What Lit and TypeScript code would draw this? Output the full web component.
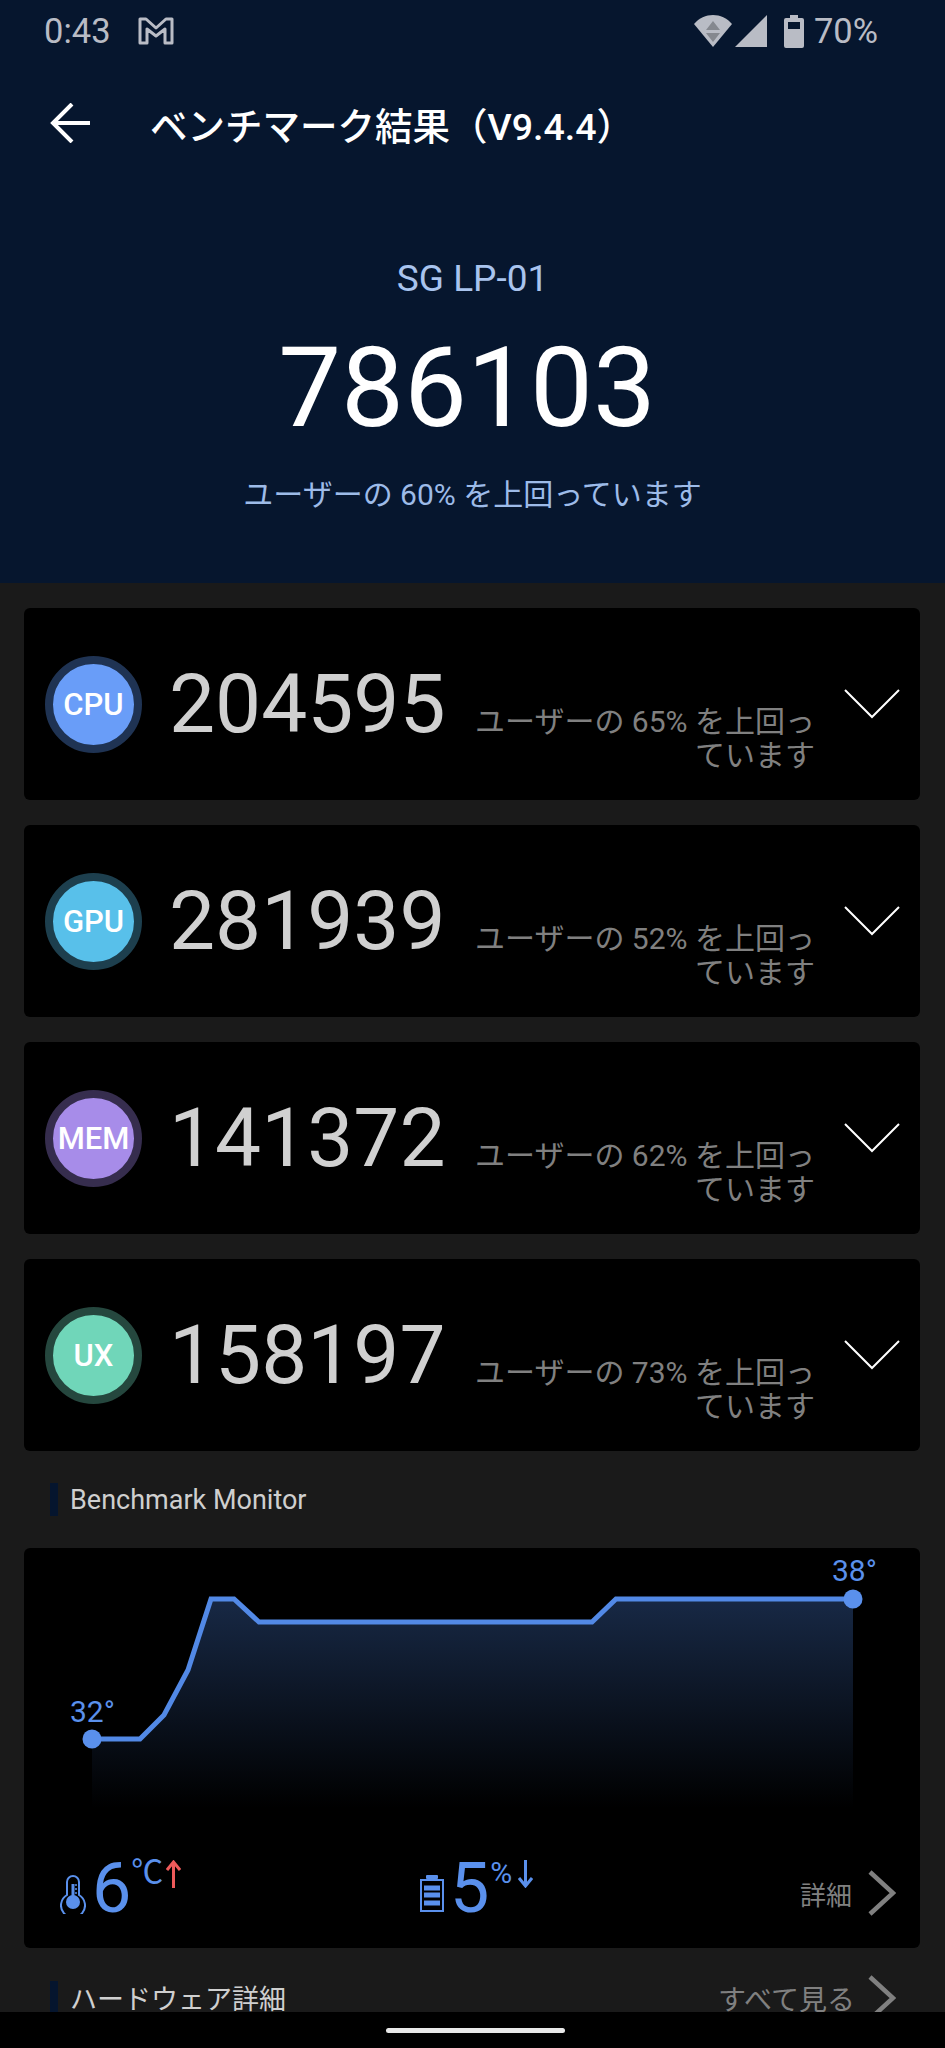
import { LitElement, css, html, svg } from "lit";
import { customElement } from "lit/decorators.js";

const SCORES = [
  { label: "CPU", score: "204595", pct: 65, fill: "#699df8", ring: "#1f3353" },
  { label: "GPU", score: "281939", pct: 52, fill: "#58c0ea", ring: "#1d3f4e" },
  { label: "MEM", score: "141372", pct: 62, fill: "#a78ce9", ring: "#362d4e" },
  { label: "UX", score: "158197", pct: 73, fill: "#70d6b9", ring: "#25473e" },
];

// temperature curve, in chart coordinates
const CURVE = [
  [68, 191], [116, 191], [140, 167], [164, 122], [187, 51], [210, 51],
  [235, 74], [568, 74], [592, 51], [829, 51],
];

@customElement("app-root")
export class AppRoot extends LitElement {
  static styles = css`
    :host {
      display: flex;
      flex-direction: column;
      height: 2048px;
      overflow: hidden;
      background: #1a1a1a;
      font-family: Roboto, "Noto Sans CJK JP", sans-serif;
    }

    .header {
      flex: none;
      height: 583px;
      background: #06162e;
      display: flex;
      flex-direction: column;
    }

    .status {
      height: 62px;
      display: flex;
      align-items: center;
      padding: 0 67px 0 44px;
      color: #b9bcc5;
      font-size: 34.5px;
    }

    .status .mail {
      margin-left: 27px;
    }

    .status .right {
      margin-left: auto;
      display: flex;
      align-items: center;
    }

    .toolbar {
      height: 122px;
      display: flex;
      align-items: center;
      padding-left: 50px;
      color: #fff;
      font-size: 37.5px;
      font-weight: 500;
    }

    .toolbar .title {
      margin-left: 60px;
    }

    .device {
      margin-top: 75px;
      height: 40px;
      line-height: 40px;
      text-align: center;
      color: #a9c4ee;
      font-size: 37px;
    }

    .total {
      margin-top: 29px;
      padding-right: 11px;
      height: 120px;
      line-height: 120px;
      text-align: center;
      color: #fff;
      font-size: 112px;
    }

    .rank {
      margin-top: 27px;
      height: 40px;
      line-height: 40px;
      text-align: center;
      color: #9dbbe8;
      font-size: 30px;
    }

    .content {
      flex: 1;
      min-height: 0;
      overflow: hidden;
      padding: 25px 25px 0 24px;
      display: flex;
      flex-direction: column;
    }

    .card {
      flex: none;
      background: #000;
      border-radius: 6px;
    }

    .score {
      height: 192px;
      margin-bottom: 25px;
      display: flex;
      align-items: center;
      padding: 0 20px 0 21px;
    }

    .badge {
      flex: none;
      box-sizing: border-box;
      width: 97px;
      height: 97px;
      border-radius: 50%;
      border: 8px solid;
      display: flex;
      align-items: center;
      justify-content: center;
      color: #fff;
      font-size: 31px;
      font-weight: 500;
    }

    .value {
      flex: none;
      margin-left: 27px;
      color: #d0d0d0;
      font-size: 82px;
      line-height: 100px;
    }

    .pct {
      flex: 1;
      margin: 70px 0 0 19px;
      text-align: right;
      color: #808080;
      font-size: 30px;
      line-height: 34px;
    }

    .score svg {
      flex: none;
      margin-left: 29px;
    }

    .section {
      flex: none;
      height: 33px;
      display: flex;
      align-items: center;
      padding-left: 26px;
      color: #cfcfcf;
      font-size: 27px;
    }

    .section .mark {
      flex: none;
      width: 8px;
      height: 33px;
      background: #05152e;
      margin-right: 12px;
    }

    .section .link {
      margin-left: auto;
      display: flex;
      align-items: center;
      color: #808080;
      font-size: 28px;
    }

    .section .link svg {
      margin: 0 24px 0 13px;
    }

    .monitor-title {
      margin-top: 7px;
    }

    .monitor {
      margin-top: 32px;
      height: 400px;
    }

    .monitor svg.chart {
      display: block;
    }

    .monitor text {
      fill: #5a90ec;
      font-size: 30px;
      font-family: Roboto, sans-serif;
    }

    .stats {
      display: grid;
      grid-template-columns: 360px 1fr auto;
      padding: 5px 24px 0 36px;
      color: #5a90ec;
    }

    .stat {
      display: flex;
      align-items: flex-start;
    }

    .stat .icon {
      margin: 22px 6px 0 0;
    }

    .stat .num {
      font-size: 70px;
      line-height: 70px;
    }

    .stat .unit {
      margin: 2px 3px 0 0;
      font-size: 32px;
      line-height: 34px;
    }

    .stat .pct-unit {
      margin: 3px 6px 0 1px;
      font-size: 30px;
      line-height: 34px;
      font-family: Roboto, sans-serif;
    }

    .stat .dir {
      margin-top: 7px;
    }

    .details {
      display: flex;
      align-items: center;
      height: 70px;
      margin-top: 5px;
      color: #808080;
      font-size: 26px;
    }

    .details svg {
      margin-left: 16px;
    }

    .hardware {
      margin-top: 33px;
    }

    .navbar {
      flex: none;
      height: 36px;
      background: #000;
      display: flex;
      align-items: center;
      justify-content: center;
    }

    .navbar .pill {
      width: 179px;
      height: 5px;
      margin: 1px 0 0 5px;
      border-radius: 3px;
      background: #e8e8e8;
    }
  `;

  private chevron(color = "#808080") {
    return html`<svg width="28" height="46" viewBox="0 0 28 46" fill="none">
      <path d="M2 2 L25 23 L2 44" stroke=${color} stroke-width="4.5" />
    </svg>`;
  }

  private statusBar() {
    return html`<div class="status">
      <span>0:43</span>
      <svg class="mail" width="36" height="28" viewBox="0 0 36 28" fill="none" stroke="#b9bcc5" stroke-width="3" stroke-linejoin="round">
        <path d="M2 2 H8 L18 11 L28 2 H34 V26 H27 V12 L18 19 L9 12 V26 H2 Z" />
      </svg>
      <div class="right">
        <svg width="38" height="32" viewBox="0 0 38 32">
          <path d="M0 9 C10 -3 28 -3 38 9 L19 32 Z" fill="#b9bcc5" />
          <path d="M19 6 L26 15 H12 Z M12 18 H26 L19 27 Z" fill="#85888f" />
        </svg>
        <svg style="margin-left:3px" width="32" height="32" viewBox="0 0 32 32">
          <path d="M0 32 L32 0 V32 Z" fill="#b9bcc5" />
        </svg>
        <svg style="margin-left:17px" width="20" height="33" viewBox="0 0 20 33">
          <path fill-rule="evenodd" d="M6 0 H14 V3 H18 Q20 3 20 5 V31 Q20 33 18 33 H2 Q0 33 0 31 V5 Q0 3 2 3 H6 Z M4 7 V14 H16 V7 Z" fill="#b9bcc5" />
        </svg>
        <span style="margin-left:10px">70%</span>
      </div>
    </div>`;
  }

  private scoreCard(s: (typeof SCORES)[number]) {
    return html`<div class="card score">
      <div class="badge" style="background:${s.fill};border-color:${s.ring}">${s.label}</div>
      <div class="value">${s.score}</div>
      <div class="pct">ユーザーの ${s.pct}% を上回っています</div>
      <svg width="56" height="30" viewBox="0 0 56 30" fill="none">
        <path d="M1 1 L28 28 L55 1" stroke="#fff" stroke-width="2" />
      </svg>
    </div>`;
  }

  private chart() {
    const line = CURVE.map((p) => p.join(",")).join(" ");
    const [sx, sy] = CURVE[0];
    const [ex, ey] = CURVE[CURVE.length - 1];
    const area = `${line} ${ex},260 ${sx},260`;
    return html`<svg class="chart" width="896" height="300" viewBox="0 0 896 300">
      <defs>
        <linearGradient id="fade" x1="0" y1="51" x2="0" y2="260" gradientUnits="userSpaceOnUse">
          <stop offset="0" stop-color="#4e87e6" stop-opacity="0.3" />
          <stop offset="1" stop-color="#4e87e6" stop-opacity="0" />
        </linearGradient>
      </defs>
      ${svg`
        <polygon points=${area} fill="url(#fade)" />
        <polyline points=${line} fill="none" stroke="#5289e6" stroke-width="5" />
        <circle cx=${sx} cy=${sy} r="9.5" fill="#5a90ec" />
        <circle cx=${ex} cy=${ey} r="9.5" fill="#5a90ec" />
        <text x="46" y="174">32°</text>
        <text x="808" y="33">38°</text>
      `}
    </svg>`;
  }

  private stats() {
    return html`<div class="stats">
      <div class="stat">
        <svg class="icon" width="26" height="39" viewBox="0 0 26 39" fill="none" stroke="#5a90ec">
          <path stroke-width="2" d="M7 20 V7 A6 6 0 0 1 19 7 V20 A12 12 0 1 1 7 20 Z" />
          <circle cx="13" cy="27" r="7" fill="#5a90ec" stroke="none" />
          <path stroke-width="3" d="M13 22 V9" />
          <path stroke-width="1.5" d="M15 10 H17 M15 14 H17 M15 18 H17" />
        </svg>
        <span class="num">6</span>
        <span class="unit">℃</span>
        <svg class="dir" width="15" height="28" viewBox="0 0 15 28" fill="none" stroke="#ee5a5a" stroke-width="3">
          <path d="M7.5 28 V2 M1 10 L7.5 2 L14 10" />
        </svg>
      </div>
      <div class="stat">
        <svg class="icon" width="24" height="37" viewBox="0 0 24 37" fill="none">
          <rect x="6" y="0" width="12" height="4" rx="1" fill="#5a90ec" />
          <rect x="1" y="5" width="22" height="31" stroke="#5a90ec" stroke-width="2" />
          <path d="M4 13 H20 M4 20 H20 M4 28 H20" stroke="#5a90ec" stroke-width="5" />
        </svg>
        <span class="num">5</span>
        <span class="pct-unit">%</span>
        <svg class="dir" width="15" height="28" viewBox="0 0 15 28" fill="none" stroke="#5a90ec" stroke-width="3">
          <path d="M7.5 0 V26 M1 18 L7.5 26 L14 18" />
        </svg>
      </div>
      <div class="details">詳細${this.chevron()}</div>
    </div>`;
  }

  render() {
    return html`
      <div class="header">
        ${this.statusBar()}
        <div class="toolbar">
          <svg width="40" height="40" viewBox="0 0 40 40" fill="none" stroke="#fff" stroke-width="4">
            <path d="M40 20 H3 M22 1 L3 20 L22 39" />
          </svg>
          <span class="title">ベンチマーク結果（V9.4.4）</span>
        </div>
        <div class="device">SG LP-01</div>
        <div class="total">786103</div>
        <div class="rank">ユーザーの 60% を上回っています</div>
      </div>
      <div class="content">
        ${SCORES.map((s) => this.scoreCard(s))}
        <div class="section monitor-title"><span class="mark"></span>Benchmark Monitor</div>
        <div class="card monitor">${this.chart()}${this.stats()}</div>
        <div class="section hardware">
          <span class="mark"></span>ハードウェア詳細
          <span class="link">すべて見る${this.chevron()}</span>
        </div>
      </div>
      <div class="navbar"><div class="pill"></div></div>
    `;
  }
}
